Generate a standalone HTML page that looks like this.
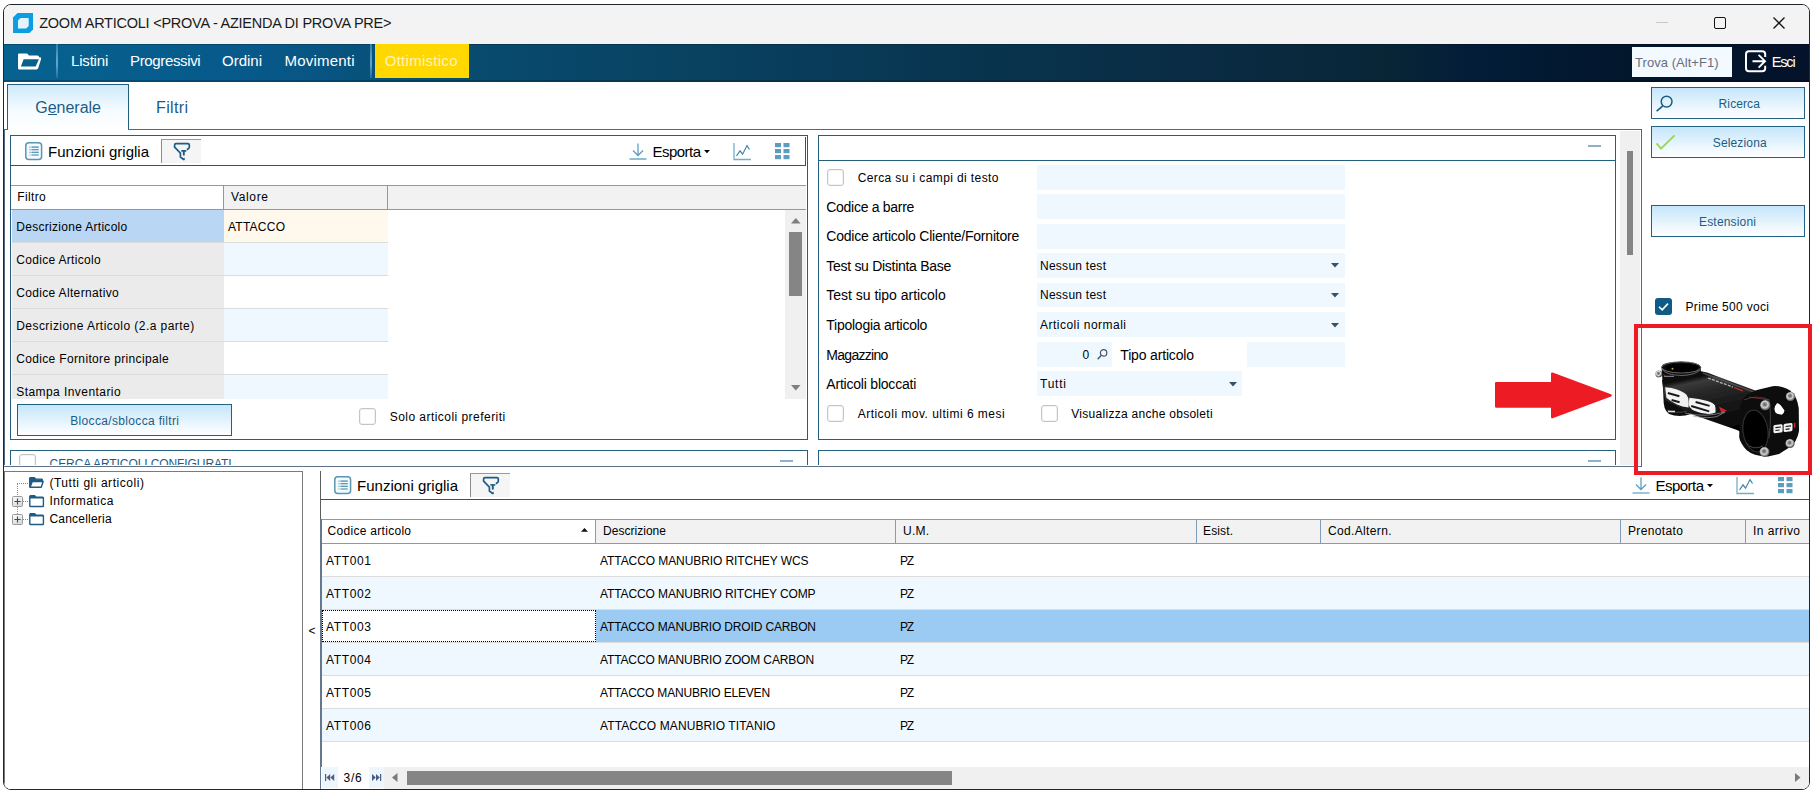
<!DOCTYPE html>
<html lang="it"><head><meta charset="utf-8"><title>ZOOM ARTICOLI</title>
<style>
html,body{margin:0;padding:0;background:#fff;}
body{width:1814px;height:793px;position:relative;overflow:hidden;font-family:"Liberation Sans",sans-serif;font-size:12px;}
#win{position:absolute;left:3px;top:4px;width:1805px;height:784px;border:1px solid #1e262e;border-radius:8px;overflow:hidden;background:#fff;}
#off{position:absolute;left:-4px;top:-5px;width:1814px;height:793px;}
#top{position:absolute;left:0;top:0;width:1814px;height:793px;}
#off div,#off svg,#top div,#top svg{position:absolute;box-sizing:border-box;}
#off svg,#top svg{overflow:visible;}
.t{white-space:pre;}
.btn{border:1px solid #22617f;background:linear-gradient(#c4e6fb 0%,#dcf0fc 40%,#f3faff 78%,#fdfeff 100%);}
.pnl{border:1px solid #245f80;background:#fff;}
.fld{background:#f0f8ff;}
.cb{border:1px solid #c4c4c4;border-radius:3px;background:#fff;box-shadow:inset 0 0 0 1px #f3f3f3;}

</style></head>
<body>
<div id="win"><div id="off">
<div style="left:4px;top:5px;width:1806px;height:39px;background:#f3f3f3;"></div>
<svg style="left:13px;top:13px;" width="20" height="20" viewBox="0 0 20 20"><path d="M4.5 0H20V16.5L16.5 20H0V4.5Z" fill="#0c9ee4"/><path d="M7.5 5H15.7V13L13.2 15.5H5V7.5Z" fill="#e4f4fc"/></svg>
<div class="t" style="left:39.2px;top:13.149999999999999px;height:20.5px;line-height:20.5px;font-size:14.5px;color:#1a1a1a;letter-spacing:-0.24px;">ZOOM ARTICOLI &lt;PROVA - AZIENDA DI PROVA PRE&gt;</div>
<div style="left:1656px;top:22px;width:12px;height:1px;background:#c8c8c8;"></div>
<div style="left:1714px;top:17px;width:12px;height:12px;border:1.4px solid #111;border-radius:2px;"></div>
<svg style="left:1773px;top:17px;" width="12" height="12" viewBox="0 0 12 12"><path d="M0.5 0.5L11.5 11.5M11.5 0.5L0.5 11.5" stroke="#111" stroke-width="1.3" fill="none"/></svg>
<div style="left:4px;top:44px;width:1806px;height:38px;background:linear-gradient(90deg,#06628f 0%,#07598a 14%,#084c70 25%,#09405f 40%,#08334d 55%,#0a2c44 66%,#082536 77%,#031d38 81%,#02162c 90%,#04122a 100%);"></div>
<div style="left:4px;top:44px;width:1806px;height:1px;background:rgba(0,0,0,.22);"></div>
<div style="left:4px;top:80px;width:1806px;height:2px;background:rgba(0,0,0,.2);"></div>
<svg style="left:18px;top:53px;" width="24" height="17" viewBox="0 0 24 17"><path fill-rule="evenodd" fill="#fff" d="M0 1.6Q0 0.4 1.2 0.4H8.6Q9.3 0.4 9.8 1L10.9 2.4H19.2Q20.6 2.4 20.9 3.6L21 4.3H22Q23.6 4.4 23.1 5.9L20.2 15.3Q19.8 16.4 18.6 16.4H1.2Q0 16.4 0 15.2ZM5.6 6.2L2.9 13.5H17.7L20.9 6.2Z"/></svg>
<div style="left:56px;top:44px;width:2px;height:34px;background:linear-gradient(#2f7fae,#5fa3cb 45%,#5fa3cb 60%,#1f6f9e);"></div>
<div class="t" style="left:71px;top:50.0px;height:21px;line-height:21px;font-size:15px;color:#fff;letter-spacing:-0.18px;">Listini</div>
<div class="t" style="left:130px;top:50.0px;height:21px;line-height:21px;font-size:15px;color:#fff;letter-spacing:-0.35px;">Progressivi</div>
<div class="t" style="left:222px;top:50.0px;height:21px;line-height:21px;font-size:15px;color:#fff;letter-spacing:-0.0px;">Ordini</div>
<div class="t" style="left:284.5px;top:50.0px;height:21px;line-height:21px;font-size:15px;color:#fff;letter-spacing:0.21px;">Movimenti</div>
<div style="left:370px;top:44px;width:2px;height:34px;background:linear-gradient(#2f7fae,#5fa3cb 45%,#5fa3cb 60%,#1f6f9e);"></div>
<div style="left:375px;top:44px;width:94px;height:34px;background:#ffd800;"></div>
<div class="t" style="left:384.7px;top:50.0px;height:21px;line-height:21px;font-size:15px;color:#fff3b8;letter-spacing:0.28px;">Ottimistico</div>
<div style="left:1632px;top:47px;width:100px;height:30px;background:#f2f9ff;"></div>
<div class="t" style="left:1635px;top:52.7px;height:19px;line-height:19px;font-size:13px;color:#6a6e7a;letter-spacing:0.05px;">Trova (Alt+F1)</div>
<svg style="left:1745px;top:50px;" width="22" height="23" viewBox="0 0 22 23"><path d="M20.2 7V4.2Q20.2 1.2 17.2 1.2H4Q1 1.2 1 4.2V18.2Q1 21.2 4 21.2H17.2Q20.2 21.2 20.2 18.2V15.8" fill="none" stroke="#fff" stroke-width="2"/><path d="M7.5 11.2H19.5M13.6 4.8L20 11.2L13.6 17.6" fill="none" stroke="#fff" stroke-width="1.9"/></svg>
<div class="t" style="left:1771.7px;top:51.75px;height:20.5px;line-height:20.5px;font-size:14.5px;color:#fff;letter-spacing:-1.14px;">Esci</div>
<div style="left:7px;top:84px;width:122px;height:46px;border:1px solid #245f80;border-bottom:none;background:linear-gradient(#cfeafb 0%,#f4fbff 55%,#fff 100%);"></div>
<div style="left:128px;top:129px;width:1514px;height:1px;background:#4d6a88;"></div>
<div style="left:1641px;top:129px;width:1px;height:338px;background:#4d6a88;"></div>
<div style="left:4px;top:129px;width:4px;height:1px;background:#4d6a88;"></div>
<div style="left:4px;top:129px;width:1px;height:337px;background:#5a6a85;"></div>
<div class="t" style="left:35.3px;top:97.0px;height:22px;line-height:22px;font-size:16px;color:#1d5c86;letter-spacing:-0.02px;">Generale</div>
<div style="left:48px;top:114px;width:9px;height:1px;background:#1d5c86;"></div>
<div class="t" style="left:156px;top:97.0px;height:22px;line-height:22px;font-size:16px;color:#1d5c86;letter-spacing:0.36px;">Filtri</div>
<div class="btn" style="left:1651px;top:87px;width:154px;height:32px;"></div>
<svg style="left:1656px;top:94px;" width="18" height="18" viewBox="0 0 18 18"><circle cx="10.6" cy="7.6" r="5.4" fill="none" stroke="#1d5c86" stroke-width="1.5"/><path d="M6.6 12.2L0.6 17.2" stroke="#1d5c86" stroke-width="1.7" fill="none"/></svg>
<div class="t" style="left:1718.6px;top:94.8px;height:18px;line-height:18px;font-size:12px;color:#1d5c86;letter-spacing:0.1px;">Ricerca</div>
<div class="btn" style="left:1651px;top:126px;width:154px;height:32px;"></div>
<svg style="left:1656px;top:133px;" width="20" height="17" viewBox="0 0 20 17"><path d="M0.6 10.4L5 15.6L18.6 2.4" fill="none" stroke="#9bd562" stroke-width="2"/></svg>
<div class="t" style="left:1712.8px;top:133.6px;height:18px;line-height:18px;font-size:12px;color:#1d5c86;letter-spacing:0.14px;">Seleziona</div>
<div class="btn" style="left:1651px;top:205px;width:154px;height:32px;"></div>
<div class="t" style="left:1699px;top:212.7px;height:18px;line-height:18px;font-size:12px;color:#1d5c86;letter-spacing:0.18px;">Estensioni</div>
<div style="left:1655px;top:298px;width:17px;height:17px;background:#0f5b84;border-radius:3px;"></div>
<svg style="left:1655px;top:298px;" width="17" height="17" viewBox="0 0 17 17"><path d="M4 8.7L7.2 11.8L13 5.6" fill="none" stroke="#fff" stroke-width="1.6"/></svg>
<div class="t" style="left:1685.5px;top:297.5px;height:18px;line-height:18px;font-size:12px;color:#000;letter-spacing:0.32px;">Prime 500 voci</div>
<div class="pnl" style="left:10px;top:135px;width:798px;height:305px;"></div>
<svg style="left:25.2px;top:141.9px;" width="17.4" height="18.2" viewBox="0 0 17.4 18.2"><rect x="0.8" y="0.8" width="15.8" height="16.6" rx="3" fill="#f3fbff" stroke="#5b95b3" stroke-width="1.5"/><path d="M3.9 5.1H13.7M3.9 7.7H13.7M3.9 10.4H13.7M3.9 13H13.7" stroke="#a9c9da" stroke-width="1.2"/><path d="M6.8 5.1H13.7M6.8 7.7H13.7M6.8 10.4H13.7M6.8 13H13.7" stroke="#5f9aba" stroke-width="1.2"/></svg>
<div class="t" style="left:48px;top:140.6px;height:21px;line-height:21px;font-size:15px;color:#000;letter-spacing:0.01px;">Funzioni griglia</div>
<div style="left:161px;top:139.0px;width:40px;height:24px;background:#f5f5f5;border-left:1px solid #8c8c8c;border-top:1px solid #9a9a9a;"></div>
<svg style="left:174px;top:143.0px;" width="17" height="18" viewBox="0 0 17 18"><path d="M12.8 6.6Q15.3 5.6 15.3 4.2V2Q15.3 0.6 13.8 0.6H2Q0.6 0.6 0.6 2V4.2L6.4 10.2V14L10.2 16.9" fill="none" stroke="#1d5c86" stroke-width="1.7" stroke-linejoin="round"/><path d="M7.3 7.9H12.3" stroke="#1d5c86" stroke-width="1.6" fill="none"/><path d="M9.8 7.9V12.6" stroke="#1d5c86" stroke-width="1.9" fill="none"/><path d="M10.6 14.6V17.2L8.2 16.4Z" fill="#1d5c86"/></svg>
<svg style="left:629px;top:143.0px;" width="18" height="17" viewBox="0 0 18 17"><path d="M9 0.5V12M4 7.5L9 12.5L14 7.5" fill="none" stroke="#5d9fc2" stroke-width="1.3"/><path d="M0.5 16H17.5" stroke="#6aa8c8" stroke-width="1.3"/></svg>
<div class="t" style="left:652.5px;top:140.6px;height:21px;line-height:21px;font-size:15px;color:#000;letter-spacing:-0.53px;">Esporta</div>
<svg style="left:703.5px;top:150.0px;" width="6" height="4" viewBox="0 0 6 4"><path d="M0 0H6L3 3.2Z" fill="#000"/></svg>
<svg style="left:733px;top:142.5px;" width="19" height="17" viewBox="0 0 19 17"><path d="M1 0V16.5H18" fill="none" stroke="#74aeca" stroke-width="1.3"/><path d="M3.5 13L7 7.8L9.6 11.2L14 2.6L16.5 6.5" fill="none" stroke="#3f84a6" stroke-width="1.2"/></svg>
<svg style="left:775px;top:142.5px;" width="15" height="17" viewBox="0 0 15 17"><rect x="0" y="0" width="6" height="4.2" fill="#5b9cbf"/><rect x="0" y="6" width="6" height="4.2" fill="#5b9cbf"/><rect x="0" y="12" width="6" height="4.2" fill="#5b9cbf"/><rect x="8.5" y="0" width="6" height="4.2" fill="#5b9cbf"/><rect x="8.5" y="6" width="6" height="4.2" fill="#5b9cbf"/><rect x="8.5" y="12" width="6" height="4.2" fill="#5b9cbf"/></svg>
<div style="left:11px;top:165px;width:795px;height:1px;background:#4d4d4d;"></div>
<div style="left:805px;top:137px;width:1px;height:28px;background:#4d4d4d;"></div>
<div style="left:11px;top:185px;width:795px;height:25px;background:#f2f2f2;border-top:1px solid #7f9db9;border-bottom:1px solid #7f9db9;"></div>
<div style="left:11px;top:186px;width:212px;height:23px;background:#fff;"></div>
<div style="left:223px;top:186px;width:1px;height:23px;background:#7f9db9;"></div>
<div style="left:387px;top:186px;width:1px;height:23px;background:#7f9db9;"></div>
<div class="t" style="left:17.2px;top:187.6px;height:18px;line-height:18px;font-size:12px;color:#000;letter-spacing:0.37px;">Filtro</div>
<div class="t" style="left:231px;top:187.6px;height:18px;line-height:18px;font-size:12px;color:#000;letter-spacing:0.64px;">Valore</div>
<div style="left:12px;top:210px;width:212px;height:33px;background:#b9d7f5;"></div>
<div style="left:224px;top:210px;width:164px;height:33px;background:#fff8ec;"></div>
<div style="left:12px;top:242px;width:376px;height:1px;background:#dcdcdc;"></div>
<div class="t" style="left:16.2px;top:217.5px;height:18px;line-height:18px;font-size:12px;color:#000;letter-spacing:0.3px;">Descrizione Articolo</div>
<div style="left:12px;top:243px;width:212px;height:33px;background:#ebebeb;"></div>
<div style="left:224px;top:243px;width:164px;height:33px;background:#f0f8ff;"></div>
<div style="left:12px;top:275px;width:376px;height:1px;background:#dcdcdc;"></div>
<div class="t" style="left:16.2px;top:250.5px;height:18px;line-height:18px;font-size:12px;color:#000;letter-spacing:0.32px;">Codice Articolo</div>
<div style="left:12px;top:276px;width:212px;height:33px;background:#ebebeb;"></div>
<div style="left:224px;top:276px;width:164px;height:33px;background:#fff;"></div>
<div style="left:12px;top:308px;width:376px;height:1px;background:#dcdcdc;"></div>
<div class="t" style="left:16.2px;top:283.5px;height:18px;line-height:18px;font-size:12px;color:#000;letter-spacing:0.34px;">Codice Alternativo</div>
<div style="left:12px;top:309px;width:212px;height:33px;background:#ebebeb;"></div>
<div style="left:224px;top:309px;width:164px;height:33px;background:#f0f8ff;"></div>
<div style="left:12px;top:341px;width:376px;height:1px;background:#dcdcdc;"></div>
<div class="t" style="left:16.2px;top:316.5px;height:18px;line-height:18px;font-size:12px;color:#000;letter-spacing:0.45px;">Descrizione Articolo (2.a parte)</div>
<div style="left:12px;top:342px;width:212px;height:33px;background:#ebebeb;"></div>
<div style="left:224px;top:342px;width:164px;height:33px;background:#fff;"></div>
<div style="left:12px;top:374px;width:376px;height:1px;background:#dcdcdc;"></div>
<div class="t" style="left:16.2px;top:349.5px;height:18px;line-height:18px;font-size:12px;color:#000;letter-spacing:0.35px;">Codice Fornitore principale</div>
<div style="left:12px;top:375px;width:212px;height:24px;background:#ebebeb;"></div>
<div style="left:224px;top:375px;width:164px;height:24px;background:#f0f8ff;"></div>
<div class="t" style="left:16.2px;top:382.5px;height:18px;line-height:18px;font-size:12px;color:#000;letter-spacing:0.44px;">Stampa Inventario</div>
<div class="t" style="left:228px;top:217.5px;height:18px;line-height:18px;font-size:12px;color:#000;letter-spacing:0.24px;">ATTACCO</div>
<div style="left:785px;top:210px;width:21px;height:189px;background:#f0f0f0;"></div>
<svg style="left:790.8px;top:217.6px;" width="9.6" height="5.4" viewBox="0 0 9.6 5.4"><path d="M0 5.4H9.6L4.8 0Z" fill="#7f7f7f"/></svg>
<div style="left:789px;top:232px;width:13px;height:64px;background:#858585;"></div>
<svg style="left:790.8px;top:385px;" width="9.6" height="5.4" viewBox="0 0 9.6 5.4"><path d="M0 0H9.6L4.8 5.4Z" fill="#7f7f7f"/></svg>
<div class="btn" style="left:17px;top:404px;width:215px;height:32px;"></div>
<div class="t" style="left:70.2px;top:411.5px;height:18px;line-height:18px;font-size:12px;color:#1d5c86;letter-spacing:0.34px;">Blocca/sblocca filtri</div>
<div class="cb" style="left:359px;top:408px;width:17px;height:17px;"></div>
<div class="t" style="left:389.7px;top:407.5px;height:18px;line-height:18px;font-size:12px;color:#000;letter-spacing:0.46px;">Solo articoli preferiti</div>
<div class="pnl" style="left:10px;top:450px;width:798px;height:40px;border-bottom:none;"></div>
<div class="cb" style="left:19px;top:454px;width:17px;height:17px;"></div>
<div class="t" style="left:49.6px;top:455.0px;height:18px;line-height:18px;font-size:12px;color:#1d5c86;letter-spacing:-0.09px;">CERCA ARTICOLI CONFIGURATI</div>
<div style="left:780px;top:460px;width:13px;height:2px;background:#8ab2c9;"></div>
<div class="pnl" style="left:818px;top:135px;width:798px;height:305px;"></div>
<div style="left:819px;top:160px;width:796px;height:1px;background:#245f80;"></div>
<div style="left:1588px;top:144.6px;width:13px;height:2px;background:#8ab2c9;"></div>
<div class="fld" style="left:1037px;top:165px;width:308px;height:25px;"></div>
<div class="fld" style="left:1037px;top:194px;width:308px;height:25px;"></div>
<div class="fld" style="left:1037px;top:224px;width:308px;height:25px;"></div>
<div class="fld" style="left:1037px;top:253px;width:308px;height:25px;"></div>
<div class="fld" style="left:1037px;top:283px;width:308px;height:24px;"></div>
<div class="fld" style="left:1037px;top:312px;width:308px;height:25px;"></div>
<div class="fld" style="left:1037px;top:342px;width:75px;height:25px;"></div>
<div class="fld" style="left:1247px;top:342px;width:98px;height:25px;"></div>
<div class="fld" style="left:1037px;top:371px;width:205px;height:25px;"></div>
<div class="cb" style="left:827px;top:169px;width:17px;height:17px;"></div>
<div class="t" style="left:857.7px;top:169.0px;height:18px;line-height:18px;font-size:12px;color:#000;letter-spacing:0.39px;">Cerca su i campi di testo</div>
<div class="t" style="left:826.3px;top:196.8px;height:20px;line-height:20px;font-size:14px;color:#000;letter-spacing:-0.29px;">Codice a barre</div>
<div class="t" style="left:826.3px;top:226.3px;height:20px;line-height:20px;font-size:14px;color:#000;letter-spacing:-0.22px;">Codice articolo Cliente/Fornitore</div>
<div class="t" style="left:826.3px;top:255.8px;height:20px;line-height:20px;font-size:14px;color:#000;letter-spacing:-0.29px;">Test su Distinta Base</div>
<div class="t" style="left:826.3px;top:285.3px;height:20px;line-height:20px;font-size:14px;color:#000;letter-spacing:-0.02px;">Test su tipo articolo</div>
<div class="t" style="left:826.3px;top:315.0px;height:20px;line-height:20px;font-size:14px;color:#000;letter-spacing:-0.25px;">Tipologia articolo</div>
<div class="t" style="left:826.3px;top:344.7px;height:20px;line-height:20px;font-size:14px;color:#000;letter-spacing:-0.71px;">Magazzino</div>
<div class="t" style="left:826.3px;top:374.0px;height:20px;line-height:20px;font-size:14px;color:#000;letter-spacing:-0.21px;">Articoli bloccati</div>
<div class="t" style="left:1040px;top:256.8px;height:18px;line-height:18px;font-size:12px;color:#000;letter-spacing:0.26px;">Nessun test</div>
<svg style="left:1331px;top:263.40000000000003px;" width="8" height="5" viewBox="0 0 8 5"><path d="M0 0H8L4 4.4Z" fill="#34536a"/></svg>
<div class="t" style="left:1040px;top:286.3px;height:18px;line-height:18px;font-size:12px;color:#000;letter-spacing:0.26px;">Nessun test</div>
<svg style="left:1331px;top:292.90000000000003px;" width="8" height="5" viewBox="0 0 8 5"><path d="M0 0H8L4 4.4Z" fill="#34536a"/></svg>
<div class="t" style="left:1040px;top:316.0px;height:18px;line-height:18px;font-size:12px;color:#000;letter-spacing:0.49px;">Articoli normali</div>
<svg style="left:1331px;top:322.6px;" width="8" height="5" viewBox="0 0 8 5"><path d="M0 0H8L4 4.4Z" fill="#34536a"/></svg>
<div class="t" style="left:1040px;top:375.0px;height:18px;line-height:18px;font-size:12px;color:#000;letter-spacing:0.77px;">Tutti</div>
<svg style="left:1228.5px;top:381.6px;" width="8" height="5" viewBox="0 0 8 5"><path d="M0 0H8L4 4.4Z" fill="#34536a"/></svg>
<div class="t" style="left:1082.5px;top:345.7px;height:18px;line-height:18px;font-size:12px;color:#000;">0</div>
<svg style="left:1097px;top:349.3px;" width="11" height="11" viewBox="0 0 11 11"><circle cx="6.6" cy="3.9" r="3.2" fill="none" stroke="#465468" stroke-width="1.2"/><path d="M4.3 6.3L0.7 10.2" stroke="#465468" stroke-width="1.4"/></svg>
<div class="t" style="left:1120.3px;top:344.7px;height:20px;line-height:20px;font-size:14px;color:#000;letter-spacing:-0.17px;">Tipo articolo</div>
<div class="cb" style="left:827px;top:405px;width:17px;height:17px;"></div>
<div class="t" style="left:857.7px;top:405.2px;height:18px;line-height:18px;font-size:12px;color:#000;letter-spacing:0.48px;">Articoli mov. ultimi 6 mesi</div>
<div class="cb" style="left:1041px;top:405px;width:17px;height:17px;"></div>
<div class="t" style="left:1071.3px;top:405.2px;height:18px;line-height:18px;font-size:12px;color:#000;letter-spacing:0.28px;">Visualizza anche obsoleti</div>
<div class="pnl" style="left:818px;top:450px;width:798px;height:40px;border-bottom:none;"></div>
<div style="left:1588px;top:460px;width:13px;height:2px;background:#8ab2c9;"></div>
<div style="left:1620px;top:131px;width:20px;height:334px;background:#f0f0f0;"></div>
<div style="left:1627px;top:151px;width:6px;height:104px;background:#858585;"></div>
<svg style="left:1495px;top:371px;" width="118" height="49" viewBox="0 0 118 49"><path d="M1.2 12.1H57.2V2.6L115.6 24.3L57.2 46.2V35.6H1.2Z" fill="#ed1c24" stroke="#ed1c24" stroke-width="2.4" stroke-linejoin="round"/></svg>
<div style="left:4px;top:465px;width:1806px;height:325px;background:#fff;"></div>
<div style="left:4px;top:466px;width:1638px;height:1px;background:#5f7188;"></div>
<div style="left:1641px;top:465px;width:1px;height:2px;background:#4d6a88;"></div>
<div style="left:4px;top:471px;width:299px;height:319px;border:1px solid #7a7a7a;border-bottom:none;background:#fff;"></div>
<div style="left:17px;top:483px;width:12px;height:1px;background-image:linear-gradient(90deg,#8c8c8c 50%,transparent 50%);background-size:2px 1px;"></div>
<div style="left:17px;top:484px;width:1px;height:12px;background-image:linear-gradient(#8c8c8c 50%,transparent 50%);background-size:1px 2px;"></div>
<div style="left:17px;top:507px;width:1px;height:7px;background-image:linear-gradient(#8c8c8c 50%,transparent 50%);background-size:1px 2px;"></div>
<svg style="left:29px;top:477px;" width="16" height="12" viewBox="0 0 16 12"><path d="M0.7 9.6V1.4Q0.7 0.6 1.5 0.6H5.4L6.8 2.2H12.6Q13.4 2.2 13.4 3V4.4H3.2Z" fill="#1d5c86" stroke="#1d5c86" stroke-width="1.3" stroke-linejoin="round"/><path d="M3.3 4.5H14.2L12.2 10.3H1Z" fill="#fff" stroke="#1d5c86" stroke-width="1.4" stroke-linejoin="round"/></svg>
<div class="t" style="left:49.4px;top:473.7px;height:18px;line-height:18px;font-size:12px;color:#000;letter-spacing:0.54px;">(Tutti gli articoli)</div>
<svg style="left:12px;top:496.0px;" width="11" height="11" viewBox="0 0 11 11"><defs><linearGradient id="pg0" x1="0" y1="0" x2="0.6" y2="1"><stop offset="0" stop-color="#fff"/><stop offset="1" stop-color="#d9d9d9"/></linearGradient></defs><rect x="0.5" y="0.5" width="10" height="10" rx="1" fill="url(#pg0)" stroke="#9a9a9a" stroke-width="1"/><path d="M2.4 5.5H8.6M5.5 2.4V8.6" stroke="#24527a" stroke-width="1.1"/></svg>
<div style="left:23px;top:501.0px;width:5px;height:1px;background-image:linear-gradient(90deg,#8c8c8c 50%,transparent 50%);background-size:2px 1px;"></div>
<svg style="left:29px;top:494.7px;" width="15" height="12" viewBox="0 0 15 12"><path d="M0.8 10.9V1.4Q0.8 0.6 1.6 0.6H5.6L7 2.2H13.6Q14.4 2.2 14.4 3V10.9Q14.4 11.5 13.6 11.5H1.6Q0.8 11.5 0.8 10.9Z" fill="#fff" stroke="#1d5c86" stroke-width="1.4" stroke-linejoin="round"/><path d="M0.8 3.4V1.4Q0.8 0.6 1.6 0.6H5.6L7 2.2H13.6Q14.4 2.2 14.4 3.4Z" fill="#1d5c86"/></svg>
<div class="t" style="left:49.4px;top:491.9px;height:18px;line-height:18px;font-size:12px;color:#000;letter-spacing:0.46px;">Informatica</div>
<svg style="left:12px;top:514.0px;" width="11" height="11" viewBox="0 0 11 11"><defs><linearGradient id="pg1" x1="0" y1="0" x2="0.6" y2="1"><stop offset="0" stop-color="#fff"/><stop offset="1" stop-color="#d9d9d9"/></linearGradient></defs><rect x="0.5" y="0.5" width="10" height="10" rx="1" fill="url(#pg1)" stroke="#9a9a9a" stroke-width="1"/><path d="M2.4 5.5H8.6M5.5 2.4V8.6" stroke="#24527a" stroke-width="1.1"/></svg>
<div style="left:23px;top:519.0px;width:5px;height:1px;background-image:linear-gradient(90deg,#8c8c8c 50%,transparent 50%);background-size:2px 1px;"></div>
<svg style="left:29px;top:512.7px;" width="15" height="12" viewBox="0 0 15 12"><path d="M0.8 10.9V1.4Q0.8 0.6 1.6 0.6H5.6L7 2.2H13.6Q14.4 2.2 14.4 3V10.9Q14.4 11.5 13.6 11.5H1.6Q0.8 11.5 0.8 10.9Z" fill="#fff" stroke="#1d5c86" stroke-width="1.4" stroke-linejoin="round"/><path d="M0.8 3.4V1.4Q0.8 0.6 1.6 0.6H5.6L7 2.2H13.6Q14.4 2.2 14.4 3.4Z" fill="#1d5c86"/></svg>
<div class="t" style="left:49.4px;top:509.9px;height:18px;line-height:18px;font-size:12px;color:#000;letter-spacing:0.22px;">Cancelleria</div>
<div class="t" style="left:308.5px;top:621.5px;height:18px;line-height:18px;font-size:12px;color:#000;">&lt;</div>
<div style="left:320px;top:471px;width:1px;height:48px;background:#5c5c5c;"></div>
<div style="left:320px;top:519px;width:2px;height:271px;background:#66788e;"></div>
<svg style="left:334.2px;top:475.9px;" width="17.4" height="18.2" viewBox="0 0 17.4 18.2"><rect x="0.8" y="0.8" width="15.8" height="16.6" rx="3" fill="#f3fbff" stroke="#5b95b3" stroke-width="1.5"/><path d="M3.9 5.1H13.7M3.9 7.7H13.7M3.9 10.4H13.7M3.9 13H13.7" stroke="#a9c9da" stroke-width="1.2"/><path d="M6.8 5.1H13.7M6.8 7.7H13.7M6.8 10.4H13.7M6.8 13H13.7" stroke="#5f9aba" stroke-width="1.2"/></svg>
<div class="t" style="left:357px;top:474.6px;height:21px;line-height:21px;font-size:15px;color:#000;letter-spacing:0.01px;">Funzioni griglia</div>
<div style="left:470px;top:473.0px;width:40px;height:24px;background:#f5f5f5;border-left:1px solid #8c8c8c;border-top:1px solid #9a9a9a;"></div>
<svg style="left:483px;top:477.0px;" width="17" height="18" viewBox="0 0 17 18"><path d="M12.8 6.6Q15.3 5.6 15.3 4.2V2Q15.3 0.6 13.8 0.6H2Q0.6 0.6 0.6 2V4.2L6.4 10.2V14L10.2 16.9" fill="none" stroke="#1d5c86" stroke-width="1.7" stroke-linejoin="round"/><path d="M7.3 7.9H12.3" stroke="#1d5c86" stroke-width="1.6" fill="none"/><path d="M9.8 7.9V12.6" stroke="#1d5c86" stroke-width="1.9" fill="none"/><path d="M10.6 14.6V17.2L8.2 16.4Z" fill="#1d5c86"/></svg>
<svg style="left:1632px;top:477.0px;" width="18" height="17" viewBox="0 0 18 17"><path d="M9 0.5V12M4 7.5L9 12.5L14 7.5" fill="none" stroke="#5d9fc2" stroke-width="1.3"/><path d="M0.5 16H17.5" stroke="#6aa8c8" stroke-width="1.3"/></svg>
<div class="t" style="left:1655.5px;top:474.6px;height:21px;line-height:21px;font-size:15px;color:#000;letter-spacing:-0.53px;">Esporta</div>
<svg style="left:1706.5px;top:484.0px;" width="6" height="4" viewBox="0 0 6 4"><path d="M0 0H6L3 3.2Z" fill="#000"/></svg>
<svg style="left:1736px;top:476.5px;" width="19" height="17" viewBox="0 0 19 17"><path d="M1 0V16.5H18" fill="none" stroke="#74aeca" stroke-width="1.3"/><path d="M3.5 13L7 7.8L9.6 11.2L14 2.6L16.5 6.5" fill="none" stroke="#3f84a6" stroke-width="1.2"/></svg>
<svg style="left:1778px;top:476.5px;" width="15" height="17" viewBox="0 0 15 17"><rect x="0" y="0" width="6" height="4.2" fill="#5b9cbf"/><rect x="0" y="6" width="6" height="4.2" fill="#5b9cbf"/><rect x="0" y="12" width="6" height="4.2" fill="#5b9cbf"/><rect x="8.5" y="0" width="6" height="4.2" fill="#5b9cbf"/><rect x="8.5" y="6" width="6" height="4.2" fill="#5b9cbf"/><rect x="8.5" y="12" width="6" height="4.2" fill="#5b9cbf"/></svg>
<div style="left:321px;top:499px;width:1489px;height:1px;background:#4d4d4d;"></div>
<div style="left:322px;top:519px;width:1487px;height:25px;background:#f2f2f2;border-top:1px solid #7f9db9;border-bottom:1px solid #7f9db9;"></div>
<div style="left:322px;top:520px;width:273px;height:23px;background:#fff;"></div>
<div class="t" style="left:327.6px;top:522.0px;height:18px;line-height:18px;font-size:12px;color:#000;letter-spacing:0.29px;">Codice articolo</div>
<svg style="left:581px;top:528.2px;" width="7" height="4" viewBox="0 0 7 4"><path d="M0 3.8H7L3.5 0Z" fill="#111"/></svg>
<div style="left:595px;top:520px;width:1px;height:23px;background:#7f9db9;"></div>
<div class="t" style="left:603px;top:522.0px;height:18px;line-height:18px;font-size:12px;color:#000;letter-spacing:0.03px;">Descrizione</div>
<div style="left:895px;top:520px;width:1px;height:23px;background:#7f9db9;"></div>
<div class="t" style="left:903px;top:522.0px;height:18px;line-height:18px;font-size:12px;color:#000;letter-spacing:0.22px;">U.M.</div>
<div style="left:1196px;top:520px;width:1px;height:23px;background:#7f9db9;"></div>
<div class="t" style="left:1203px;top:522.0px;height:18px;line-height:18px;font-size:12px;color:#000;letter-spacing:0.13px;">Esist.</div>
<div style="left:1320px;top:520px;width:1px;height:23px;background:#7f9db9;"></div>
<div class="t" style="left:1328px;top:522.0px;height:18px;line-height:18px;font-size:12px;color:#000;letter-spacing:0.35px;">Cod.Altern.</div>
<div style="left:1620px;top:520px;width:1px;height:23px;background:#7f9db9;"></div>
<div class="t" style="left:1628px;top:522.0px;height:18px;line-height:18px;font-size:12px;color:#000;letter-spacing:0.37px;">Prenotato</div>
<div style="left:1745px;top:520px;width:1px;height:23px;background:#7f9db9;"></div>
<div class="t" style="left:1753px;top:522.0px;height:18px;line-height:18px;font-size:12px;color:#000;letter-spacing:0.46px;">In arrivo</div>
<div style="left:322px;top:544px;width:1487px;height:32px;background:#fff;"></div>
<div style="left:322px;top:576px;width:1487px;height:1px;background:#dcdcdc;"></div>
<div class="t" style="left:326px;top:551.5px;height:18px;line-height:18px;font-size:12px;color:#000;letter-spacing:0.64px;">ATT001</div>
<div class="t" style="left:600px;top:551.5px;height:18px;line-height:18px;font-size:12px;color:#000;letter-spacing:-0.08px;">ATTACCO MANUBRIO RITCHEY WCS</div>
<div class="t" style="left:900px;top:551.5px;height:18px;line-height:18px;font-size:12px;color:#000;letter-spacing:-1.34px;">PZ</div>
<div style="left:322px;top:577px;width:1487px;height:32px;background:#f0f8ff;"></div>
<div style="left:322px;top:609px;width:1487px;height:1px;background:#dcdcdc;"></div>
<div class="t" style="left:326px;top:584.5px;height:18px;line-height:18px;font-size:12px;color:#000;letter-spacing:0.64px;">ATT002</div>
<div class="t" style="left:600px;top:584.5px;height:18px;line-height:18px;font-size:12px;color:#000;letter-spacing:-0.11px;">ATTACCO MANUBRIO RITCHEY COMP</div>
<div class="t" style="left:900px;top:584.5px;height:18px;line-height:18px;font-size:12px;color:#000;letter-spacing:-1.34px;">PZ</div>
<div style="left:322px;top:610px;width:1487px;height:32px;background:#9bcaf3;"></div>
<div style="left:322px;top:610px;width:274px;height:32px;background:#fff;border:1px dotted #000;"></div>
<div style="left:322px;top:642px;width:1487px;height:1px;background:#dcdcdc;"></div>
<div class="t" style="left:326px;top:617.5px;height:18px;line-height:18px;font-size:12px;color:#000;letter-spacing:0.64px;">ATT003</div>
<div class="t" style="left:600px;top:617.5px;height:18px;line-height:18px;font-size:12px;color:#000;letter-spacing:-0.15px;">ATTACCO MANUBRIO DROID CARBON</div>
<div class="t" style="left:900px;top:617.5px;height:18px;line-height:18px;font-size:12px;color:#000;letter-spacing:-1.34px;">PZ</div>
<div style="left:322px;top:643px;width:1487px;height:32px;background:#f0f8ff;"></div>
<div style="left:322px;top:675px;width:1487px;height:1px;background:#dcdcdc;"></div>
<div class="t" style="left:326px;top:650.5px;height:18px;line-height:18px;font-size:12px;color:#000;letter-spacing:0.64px;">ATT004</div>
<div class="t" style="left:600px;top:650.5px;height:18px;line-height:18px;font-size:12px;color:#000;letter-spacing:-0.13px;">ATTACCO MANUBRIO ZOOM CARBON</div>
<div class="t" style="left:900px;top:650.5px;height:18px;line-height:18px;font-size:12px;color:#000;letter-spacing:-1.34px;">PZ</div>
<div style="left:322px;top:676px;width:1487px;height:32px;background:#fff;"></div>
<div style="left:322px;top:708px;width:1487px;height:1px;background:#dcdcdc;"></div>
<div class="t" style="left:326px;top:683.5px;height:18px;line-height:18px;font-size:12px;color:#000;letter-spacing:0.64px;">ATT005</div>
<div class="t" style="left:600px;top:683.5px;height:18px;line-height:18px;font-size:12px;color:#000;letter-spacing:-0.19px;">ATTACCO MANUBRIO ELEVEN</div>
<div class="t" style="left:900px;top:683.5px;height:18px;line-height:18px;font-size:12px;color:#000;letter-spacing:-1.34px;">PZ</div>
<div style="left:322px;top:709px;width:1487px;height:32px;background:#f0f8ff;"></div>
<div style="left:322px;top:741px;width:1487px;height:1px;background:#dcdcdc;"></div>
<div class="t" style="left:326px;top:716.5px;height:18px;line-height:18px;font-size:12px;color:#000;letter-spacing:0.64px;">ATT006</div>
<div class="t" style="left:600px;top:716.5px;height:18px;line-height:18px;font-size:12px;color:#000;letter-spacing:0.1px;">ATTACCO MANUBRIO TITANIO</div>
<div class="t" style="left:900px;top:716.5px;height:18px;line-height:18px;font-size:12px;color:#000;letter-spacing:-1.34px;">PZ</div>
<div style="left:321px;top:767px;width:1488px;height:22px;background:#f0f0f0;"></div>
<div style="left:321px;top:767px;width:63px;height:22px;background:#fff;"></div>
<div style="left:322px;top:767px;width:16px;height:21px;background:#eef6fd;"></div>
<div style="left:369px;top:767px;width:15px;height:21px;background:#eef6fd;"></div>
<svg style="left:325px;top:774px;" width="10" height="7" viewBox="0 0 10 7"><path d="M0.6 0V7" stroke="#4a5f80" stroke-width="1.2"/><path d="M5.2 0V7L1.4 3.5ZM9.2 0V7L5.4 3.5Z" fill="#4a5f80"/></svg>
<div class="t" style="left:343.5px;top:769.3px;height:18px;line-height:18px;font-size:12px;color:#000;letter-spacing:0.71px;">3/6</div>
<svg style="left:372px;top:774px;" width="10" height="7" viewBox="0 0 10 7"><path d="M8.6 0V7" stroke="#4a5f80" stroke-width="1.2"/><path d="M4 0V7L7.8 3.5ZM0 0V7L3.8 3.5Z" fill="#4a5f80"/></svg>
<svg style="left:391.5px;top:773px;" width="6" height="9" viewBox="0 0 6 9"><path d="M5.5 0V9L0 4.5Z" fill="#7a7a7a"/></svg>
<div style="left:407px;top:771px;width:545px;height:14px;background:#858585;"></div>
<svg style="left:1795px;top:773px;" width="6" height="9" viewBox="0 0 6 9"><path d="M0 0V9L5.5 4.5Z" fill="#7a7a7a"/></svg>

</div></div>
<div id="top">

<div style="left:1634.2px;top:324px;width:177.8px;height:150.7px;border:4.8px solid #ed1c24;"></div>
<svg style="left:1645px;top:350px;" width="165" height="115" viewBox="0 0 165 115">
<defs>
<radialGradient id="bolt" cx="45%" cy="42%" r="62%"><stop offset="0" stop-color="#5e5e5e"/><stop offset="0.28" stop-color="#8e8e8e"/><stop offset="0.5" stop-color="#d4d4d4"/><stop offset="0.75" stop-color="#7c7c7c"/><stop offset="1" stop-color="#2a2a2a"/></radialGradient>
<linearGradient id="tube" x1="0" y1="0" x2="0.35" y2="1"><stop offset="0" stop-color="#0b0b0b"/><stop offset="0.2" stop-color="#0e0e0e"/><stop offset="0.27" stop-color="#3a3a3a"/><stop offset="0.4" stop-color="#2a2a2a"/><stop offset="0.7" stop-color="#161616"/><stop offset="1" stop-color="#060606"/></linearGradient>
<filter id="sb" x="-5%" y="-5%" width="110%" height="110%"><feGaussianBlur stdDeviation="0.45"/></filter>
</defs>
<g filter="url(#sb)">
<!-- steerer clamp bottom knob -->
<path d="M18.5 47Q18 60 24 64Q34 68 46 64L50 60L48 47Z" fill="#0b0b0b"/>
<path d="M22 60Q30 64 44 61" stroke="#555" stroke-width="0.8" fill="none"/>
<!-- steerer clamp -->
<path d="M16.6 17.5Q16 12 36 11.8Q56 12 55.8 18L56 30L50 62L24 58L18.5 47Z" fill="#0a0a0a"/>
<!-- main tube -->
<path d="M50 20L62 22.5L117 43L121 50L100 84L92 80L46 64L20 50L17 30Z" fill="url(#tube)"/>
<path d="M58 23L114 44" stroke="#5a5a5a" stroke-width="1.6" fill="none" opacity=".75"/>
<path d="M63 28L88 37" stroke="#d8d8d8" stroke-width="1.3" fill="none" opacity=".8" stroke-dasharray="3 1.2"/>
<path d="M89 37.5L98 41" stroke="#c33" stroke-width="1.2" fill="none"/>
<!-- clamp rim -->
<ellipse cx="36.2" cy="17.4" rx="19.6" ry="5.6" fill="#0a0a0a" stroke="#6f6f6f" stroke-width="1"/>
<ellipse cx="37" cy="18" rx="16.5" ry="4.2" fill="#000"/>
<path d="M17 19Q20 25 37 25.5Q50 25 55 20" stroke="#8a8a8a" stroke-width="0.9" fill="none" opacity=".8"/>
<circle cx="27.5" cy="18.8" r="1" fill="#c8a23c"/>
<path d="M19 26.3H29" stroke="#bbb" stroke-width="0.8"/><path d="M18.5 24.5L20.5 26" stroke="#d22" stroke-width="0.9"/>
<!-- big white logo -->
<path d="M20.2 37.2Q27 37.6 32 39.4Q38.5 41.5 41.5 44.8Q43.6 47.5 43.6 51V57.6Q37 56.8 32 54.4Q25.5 51.5 21.4 47.8Z" fill="#f2f2f2"/>
<path d="M22.8 43L34.4 46.2M26.6 50L34.6 52.2" stroke="#15181f" stroke-width="2" fill="none"/>
<path d="M44.4 47.8Q54 48.5 62.4 50.9Q68.5 52.6 70 55.6Q70.8 58 70.6 62.6Q66 64.6 60 63.6Q52 62.4 47.6 60Q44 57.6 43.6 54.2Z" fill="#f2f2f2"/>
<path d="M50.6 52L64.6 55.9M46.2 56L64.2 61.4" stroke="#15181f" stroke-width="1.9" fill="none"/>
<path d="M73.9 56.6L82 60.7L76.3 62.4Z" fill="#d8232a"/>
<path d="M40 63Q60 68 80 62M48 66Q62 69 72 66.5L80 62" stroke="#9a9a9a" stroke-width="0.7" fill="none"/>
<path d="M23 61.5H30" stroke="#ddd" stroke-width="1.6"/>
<!-- handlebar clamp -->
<path d="M101.5 45L112 40L127.6 36.2Q138 35.5 145 40.6Q152 46 153.7 58L154 81Q152 92 145 97L134 104L123 106.5Q108 106 101.5 100Q95 93 94.2 87L95 62Q96 50 101.5 45Z" fill="#080808"/>
<path d="M99 50Q112 44 124 50Q127 66 124 88" stroke="#3c3c3c" stroke-width="1.2" fill="none"/>
<ellipse cx="110.5" cy="81" rx="12.5" ry="21" fill="#000" stroke="#2e2e2e" stroke-width="1.3" transform="rotate(-8 110.5 81)"/>
<path d="M101 93Q108 101 118 96" stroke="#4a4a4a" stroke-width="1" fill="none"/>
<path d="M132 53.2Q134.5 52.5 139.5 60.5Q139 64 136.8 64.8Q131 64 130.2 62Q128 57.5 132 53.2Z" fill="#fff"/>
<path d="M104 47L124 50" stroke="#a33" stroke-width="0.7" fill="none"/>
<!-- small white logo -->
<path d="M128.4 76.4Q128.4 75 129.8 74.9L136 74.2Q137.6 74.1 137.6 75.6V81Q137.6 82.3 136.2 82.5L130 83.2Q128.4 83.3 128.4 81.8Z" fill="#f2f2f2"/>
<path d="M138.6 75.2Q138.6 73.9 140 73.8L146 73.1Q147.5 73 147.5 74.4V79.8Q147.5 81.1 146.1 81.3L140.2 82Q138.6 82.1 138.6 80.7Z" fill="#f2f2f2"/>
<path d="M130.4 77.6L136 77M130.4 80.5L134.6 80M140.6 76.5L146 75.9M140.6 79.4L144.6 78.9" stroke="#15181f" stroke-width="1.1" fill="none"/>
<path d="M148.6 73L150.5 72.8L150.3 77.6L148.9 77.9Z" fill="#d8232a"/>
<!-- bolts -->
<circle cx="13.8" cy="23.9" r="3.4" fill="url(#bolt)"/>
<circle cx="120.3" cy="55.3" r="5.2" fill="url(#bolt)"/>
<circle cx="145.5" cy="46.6" r="4.7" fill="url(#bolt)"/>
<circle cx="145" cy="93.5" r="4.6" fill="url(#bolt)"/>
<circle cx="119.6" cy="102" r="5" fill="url(#bolt)"/>
</g>
</svg>
</div>
</body></html>
